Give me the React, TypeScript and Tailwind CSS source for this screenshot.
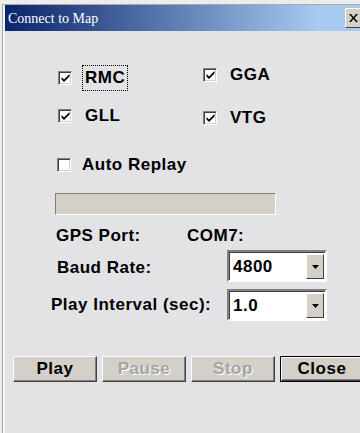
import React from 'react';

const font = { fontFamily: '"Liberation Sans", Arial, sans-serif' };

function Box({ checked }: { checked: boolean }) {
  return (
    <div className="w-[14px] h-[14px] shrink-0 bg-white border-t border-l border-[#808080] border-r border-b border-r-white border-b-white shadow-[inset_1px_1px_0_#404040,inset_-1px_-1px_0_#d4d0c8] flex items-center justify-center">
      {checked && (
        <svg width="9" height="9" viewBox="0 0 9 9" className="mt-[1px]">
          <path d="M0.5 3 L0.5 5.5 L3 8 L8.5 2.5 L8.5 0 L3 5.5 Z" fill="#000" />
        </svg>
      )}
    </div>
  );
}

function Check({ label, checked, focused }: { label: string; checked: boolean; focused?: boolean }) {
  return (
    <div className="flex items-center h-[26px]">
      <Box checked={checked} />
      <div
        className={`ml-[10px] h-[26px] flex items-center px-[2px] ${focused ? 'border border-dotted border-black' : 'border border-transparent'}`}
      >
        <span className="text-[17px] font-bold tracking-[0.5px] text-black">{label}</span>
      </div>
    </div>
  );
}

function Combo({ value }: { value: string }) {
  return (
    <div className="w-[100px] h-[32px] bg-white border-2 border-t-[#808080] border-l-[#808080] border-r-white border-b-white flex">
      <div className="flex-1 border-t border-l border-[#404040] flex items-center pl-[3px]">
        <span className="text-[17px] font-bold tracking-[0.5px]">{value}</span>
      </div>
      <div className="w-[19px] border-t border-[#404040] flex items-stretch">
        <div className="flex-1 my-[1px] mr-[1px] bg-[#d4d0c8] border border-t-white border-l-white border-r-[#404040] border-b-[#404040] flex items-center justify-center">
          <svg width="7" height="4" viewBox="0 0 7 4">
            <path d="M0 0 H7 L3.5 4 Z" fill="#000" />
          </svg>
        </div>
      </div>
    </div>
  );
}

function Btn({ label, disabled, isDefault }: { label: string; disabled?: boolean; isDefault?: boolean }) {
  return (
    <div className={`w-[84px] h-[26px] shrink-0 ${isDefault ? 'border border-black' : ''}`}>
      <div className="h-full w-full bg-[#d4d0c8] border border-t-white border-l-white border-r-[#404040] border-b-[#404040] shadow-[inset_-1px_-1px_0_#808080] flex items-center justify-center">
        <span
          className={`text-[17px] font-bold tracking-[0.5px] ${disabled ? 'text-[#a4a4a4]' : 'text-black'}`}
          style={disabled ? { textShadow: '1px 1px 0 #fff' } : undefined}
        >
          {label}
        </span>
      </div>
    </div>
  );
}

export default function App() {
  return (
    <div className="w-[360px] h-[433px] overflow-hidden bg-[#ececec]" style={font}>
      <div className="h-full pt-[4px] pl-[2px]">
        <div className="h-full border-l border-t border-[#a8a8a8] pl-[2px] bg-[#f4f4f4]">
          <div className="h-full bg-[#e3e3e5] flex flex-col">
            {/* Title bar */}
            <div className="h-[26px] bg-[linear-gradient(to_right,#0a246a,#a6caf0_88%)] flex items-center justify-between shrink-0">
              <span className="pl-[3px] text-white text-[14px]" style={{ fontFamily: '"Liberation Serif", serif' }}>
                Connect to Map
              </span>
              <div className="w-[21px] h-[20px] -mr-[6px] bg-[#d4d0c8] border border-t-white border-l-white border-r-[#404040] border-b-[#404040] flex items-center justify-center">
                <svg width="9" height="8" viewBox="0 0 9 8" className="-ml-[4px]">
                  <path d="M0 0 H2 L4.5 3 L7 0 H9 L5.5 4 L9 8 H7 L4.5 5 L2 8 H0 L3.5 4 Z" fill="#000" />
                </svg>
              </div>
            </div>

            {/* Checkboxes */}
            <div className="flex mt-[31px] ml-[53px]">
              <div className="w-[145px] pt-[3px] flex flex-col gap-[12px]">
                <Check label="RMC" checked focused />
                <Check label="GLL" checked />
              </div>
              <div className="flex flex-col gap-[17px]">
                <Check label="GGA" checked />
                <Check label="VTG" checked />
              </div>
            </div>

            {/* Auto replay */}
            <div className="mt-[24px] ml-[52px] h-[20px] flex items-center">
              <Box checked={false} />
              <span className="ml-[11px] text-[17px] font-bold tracking-[0.5px]">Auto Replay</span>
            </div>

            {/* Progress */}
            <div className="mt-[18px] ml-[50px] w-[221px] h-[22px] bg-[#d4d0c8] border border-t-[#808080] border-l-[#808080] border-r-white border-b-white" />

            {/* GPS Port */}
            <div className="mt-[11px] ml-[51px] h-[20px] flex items-center">
              <span className="w-[131px] text-[17px] font-bold tracking-[0.5px]">GPS Port:</span>
              <span className="text-[17px] font-bold tracking-[0.5px]">COM7:</span>
            </div>

            {/* Baud */}
            <div className="mt-[4px] ml-[52px] flex items-center">
              <span className="w-[170px] text-[17px] font-bold tracking-[0.5px] pt-[4px]">Baud Rate:</span>
              <Combo value="4800" />
            </div>

            {/* Interval */}
            <div className="mt-[7px] ml-[46px] flex items-center">
              <span className="w-[176px] text-[17px] font-bold tracking-[0.5px]">Play Interval (sec):</span>
              <Combo value="1.0" />
            </div>

            {/* Buttons */}
            <div className="mt-[35px] ml-[8px] flex gap-[5px]">
              <Btn label="Play" />
              <Btn label="Pause" disabled />
              <Btn label="Stop" disabled />
              <Btn label="Close" isDefault />
            </div>
          </div>
        </div>
      </div>
    </div>
  );
}
